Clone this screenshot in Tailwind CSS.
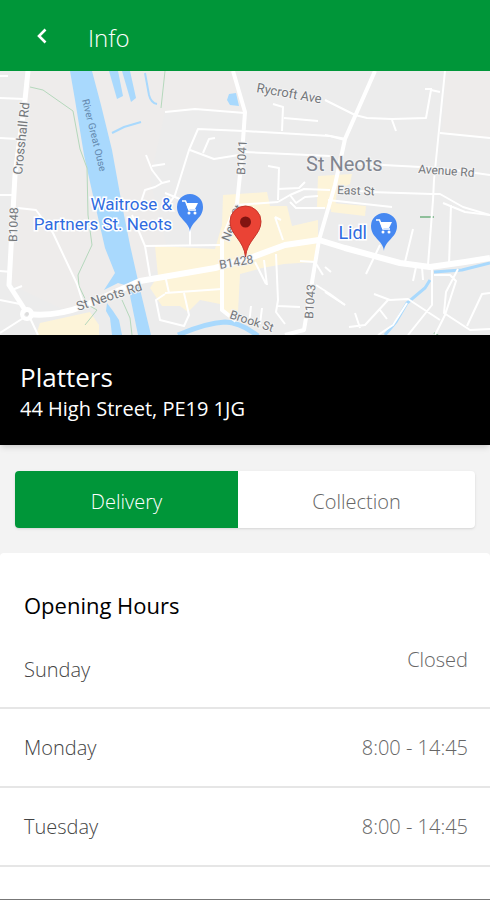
<!DOCTYPE html>
<html lang="en">
<head>
  <meta charset="UTF-8">
  <meta name="viewport" content="width=device-width, initial-scale=1.0">
  <title>Info - Platters</title>
  <script src="https://cdn.jsdelivr.net/npm/@tailwindcss/browser@4"></script>
</head>
<body class="flex min-h-screen flex-col bg-[#f3f3f3] font-['Open_Sans',sans-serif]">
  <!-- Header -->
  <header class="flex h-[71px] items-center bg-[#009639] px-7 text-white">
    <button type="button" aria-label="Back" class="flex h-8 w-7 items-center justify-center">
      <svg class="h-4 w-4" viewBox="0 0 16 16" fill="none" stroke="currentColor" stroke-width="2.6"><path d="M11.5 1.5 5 8l6.5 6.5"/></svg>
    </button>
    <h1 class="ml-8 pt-1 text-2xl font-light">Info</h1>
  </header>

  <main class="flex flex-1 flex-col">
    <!-- Map -->
    <svg class="block h-[264px] w-full bg-[#ececec]" viewBox="0 71 490 264" preserveAspectRatio="xMidYMid slice" role="img" aria-label="Map of St Neots" font-family="Roboto, sans-serif">
      <rect x="0" y="71" width="490" height="264" fill="#ececec"/>
      <path d="M27 71H235L244 112 205 109 165 112 150 180 170 260 100 312 60 308 12 285 14 200Z" fill="#eeeceb"/>
      <path d="M446 71H490V138L442 132Z" fill="#eeeceb"/>
      <!-- Built-up areas -->
      <g fill="#fdf4d9">
        <path d="M223 195 267 192 270 206 287 206 292 226 318 220V236L314 262 284 264 262 268 240 274 238 312 226 316 220 304 200 300 188 312 180 306 162 306 150 288 158 276 155 246 215 249 222 225Z"/>
        <path d="M318 176 352 174 350 184 337 190 335 210 317 207Z"/>
        <path d="M332 203 366 206 365 216 331 212Z"/>
        <path d="M40 323 90 312 99 325 99 335H36Z"/>
      </g>
      <!-- Water -->
      <g fill="#a9d9fd">
        <path d="M70 71H92L101 105 112 150 122 205 130 245 139 285 151 335H138L128 286 118 283 104 290 115 273 105 248 94 200 84 155 75 100Z"/>
        <path d="M107 303 113 311 119 320 122 335H112L110 318 106 311Z"/>
        <path d="M109 71H118L123 96 117 99ZM122 71H130L136 98 131 102Z"/>
        <path d="M229 94 236 93 239 106 230 105 227 100Z"/>
      </g>
      <g fill="none" stroke="#a9d9fd" stroke-width="3">
        <path d="M145 73 149 95Q151 103 157 104M112 133 124 127 141 122" stroke-width="2"/>
        <path d="M178 335Q206 323 225 322 240 322 258 336" stroke-width="5"/>
        <path d="M490 263 462 270 434 272M430 280 425 288 407 303 396 322 385 335"/>
      </g>
      <g fill="none" stroke="#b5d8bc" stroke-width="1">
        <path d="M30 87 43 90 73 111 80 149 87 168 88 215 92 245 78 275 79 286 88 305 97 310 85 325M122 300 130 318 132 335M165 71 161 108"/>
        <path d="M420 217H434M434 333 440 337" stroke="#8ebf9a" stroke-width="2"/>
      </g>
      <!-- Minor roads -->
      <g fill="none" stroke="#fff" stroke-width="2" stroke-linejoin="round">
        <path d="M0 76H8M0 98 25 99M0 138 18 139M0 195H14M0 271 12 272M12 290 22 286M18 208 36 210 53 233 77 284 84 306M0 333 25 317M30 318 38 335M0 300 20 304"/>
        <path d="M146 155 152 170 162 183 155 187 145 190 141 202M152 166 165 164M162 183 170 181M132 215 145 246 150 276M145 246 220 245"/>
        <path d="M165 112 195 109 245 113M244 131 198 129 189 150 175 195 165 210M190 150 214 159 245 154M203 153 209 139 215 138M245 131 330 136 345 140M245 152 330 156M273 104 283 107 282 131M284 118 318 121"/>
        <path d="M268 166 279 168 278 200M278 189 299 188 305 182M236 205 278 202M165 193 180 199 190 230M190 230V245M165 293 222 289M165 275 169 293M165 294 156 300 160 320 184 326 189 315 184 293M264 260 267 285M255 262 266 284M276 254 278 300 276 312 285 324M251 306 249 325M262 308 260 324M278 306 300 307"/>
        <path d="M278 202 290 195 304 189 330 190M290 202 296 208H325M290 195 296 203 305 197 318 196M275 217 283 240M275 217 281 220M300 261 315 262 323 275M316 285 330 294 345 305"/>
        <path d="M325 100 355 115M355 115 367 118 392 119 426 118 431 90 440 92M392 120 396 131M425 89H432M445 71 440 120 434 180 433 200M440 133 490 138M325 135 346 139M345 163 440 168 490 175M338 189 370 192 432 194 440 194 463 207 490 215"/>
        <path d="M328 200 392 207M413 229 405 262M380 245 366 274M433 200 428 265M451 205 449 265M325 267 331 272M325 292 345 305M416 267 413 281M422 267 423 280M432 268V305L408 335M434 275 450 275 456 281 445 315 435 335M458 269 446 292 444 313 470 330 490 329M467 326 482 294 490 293M374 294 390 300 408 299 440 320M388 300 365 325 349 327M355 313 360 328M380 310 387 319M407 303 393 325 378 335M443 203 465 212 490 215"/>
      </g>
      <!-- Main roads -->
      <g fill="none" stroke="#fff" stroke-linejoin="round">
        <path d="M28 71 25 100 15 175 9 285 27 313" stroke-width="5"/>
        <path d="M28 314Q55 317 84 306L140 281 215 268 250 258 285 245 319 240 345 248 400 263 430 267 465 262 490 258" stroke-width="6"/>
        <path d="M233 71 245 112 242 155 237 204 222 240 222 310 236 321M375 71 345 139 335 185 319 240 304 330 285 335" stroke-width="4"/>
        <circle cx="27" cy="314" r="5" stroke-width="4"/>
      </g>
      <circle cx="27" cy="314" r="2" fill="#ddd"/>
      <!-- Road names -->
      <g fill="#74777b" stroke="#f3f3f3" stroke-width="2" paint-order="stroke" font-size="12">
        <text transform="translate(22 175) rotate(-84)" font-size="13">Crosshall Rd</text>
        <text transform="translate(17 242) rotate(-88)">B1048</text>
        <text transform="translate(245 175) rotate(-87)">B1041</text>
        <text transform="translate(313 319) rotate(-86)">B1043</text>
        <text transform="translate(256 92) rotate(10)" font-size="13">Rycroft Ave</text>
        <text transform="translate(418 173) rotate(4)">Avenue Rd</text>
        <text transform="translate(337 194) rotate(2)">East St</text>
        <text transform="translate(78 311) rotate(-18)" font-size="13">St Neots Rd</text>
        <text transform="translate(220 269) rotate(-10)">B1428</text>
        <text transform="translate(229 242) rotate(-68)">New St</text>
        <text transform="translate(229 318) rotate(18)">Brook St</text>
      </g>
      <text transform="translate(82 100) rotate(76)" font-size="10" fill="#6388ad">River Great Ouse</text>
      <text x="306" y="171" font-size="20" fill="#81858f" stroke="#f3f3f3" stroke-width="2" paint-order="stroke">St Neots</text>
      <!-- Shops -->
      <g fill="#2f6be0" stroke="#fff" stroke-width="3" paint-order="stroke" font-size="17">
        <text x="172" y="210" text-anchor="end">Waitrose &amp;</text>
        <text x="172" y="230" text-anchor="end">Partners St. Neots</text>
        <text x="367" y="239" text-anchor="end" font-size="18">Lidl</text>
      </g>
      <defs>
        <g id="shop">
          <path d="M0 25C-1 14-13 12-13 0A13 13 0 0 1 13 0C13 12 1 14 0 25Z" fill="#4688f1"/>
          <path d="M-8-6H-4.5L-1 3H6" fill="none" stroke="#fff" stroke-width="1.5"/>
          <path d="M-4-4H8L5 2H-2Z" fill="#fff"/>
          <circle cx="-1" cy="6" r="1.5" fill="#fff"/><circle cx="5" cy="6" r="1.5" fill="#fff"/>
        </g>
      </defs>
      <use href="#shop" x="190" y="207"/>
      <use href="#shop" x="384" y="226"/>
      <!-- Restaurant marker -->
      <path d="M245.5 257C244 240 230 235 230 221.5A15.5 15.5 0 0 1 261 221.5C261 235 247 240 245.5 257Z" fill="#ea4335" stroke="#c5352b"/>
      <circle cx="245.5" cy="222" r="5.5" fill="#811411"/>
    </svg>

    <!-- Restaurant -->
    <section class="h-[110px] bg-black px-5 pt-6 text-white shadow-md">
      <h2 class="text-[26px] leading-9">Platters</h2>
      <p class="text-xl leading-7">44 High Street, PE19 1JG</p>
    </section>

    <!-- Order type -->
    <div class="mx-[15px] mt-[26px] mb-[25px] flex h-[57px] overflow-hidden rounded-sm bg-white text-xl font-light shadow">
      <button type="button" class="w-[223px] bg-[#009639] pt-1 text-white">Delivery</button>
      <button type="button" class="flex-1 pt-1 text-[#666]">Collection</button>
    </div>

    <!-- Opening hours -->
    <section class="flex-1 rounded-t border-b border-[#777] bg-white pt-9">
      <h3 class="px-6 text-[22px] leading-8">Opening Hours</h3>
      <table class="w-full text-xl font-light text-[#444]">
        <tbody>
          <tr class="h-[87px] border-b-2 border-[#e6e6e6]">
            <th scope="row" class="pl-6 pt-3 text-left font-light">Sunday</th>
            <td class="pr-[22px] pb-2 text-right text-[#666]">Closed</td>
          </tr>
          <tr class="h-[79px] border-b-2 border-[#e6e6e6]">
            <th scope="row" class="pl-6 text-left font-light">Monday</th>
            <td class="pr-[22px] text-right text-[#666]">8:00 - 14:45</td>
          </tr>
          <tr class="h-[79px] border-b-2 border-[#e6e6e6]">
            <th scope="row" class="pl-6 text-left font-light">Tuesday</th>
            <td class="pr-[22px] text-right text-[#666]">8:00 - 14:45</td>
          </tr>
        </tbody>
      </table>
    </section>
  </main>
</body>
</html>
